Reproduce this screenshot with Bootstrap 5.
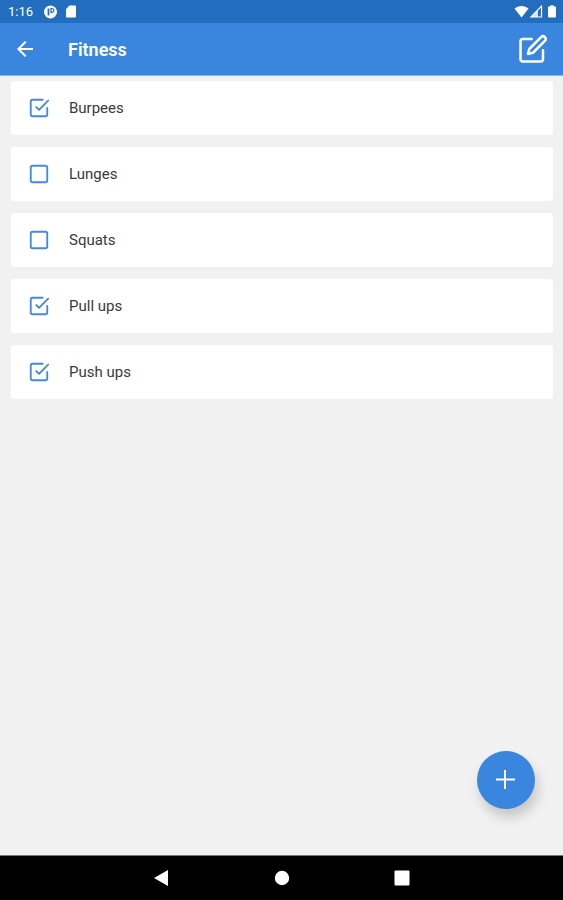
<!DOCTYPE html>
<html lang="en">
<head>
<meta charset="utf-8">
<meta name="viewport" content="width=device-width, initial-scale=1">
<title>Fitness</title>
<link href="https://cdn.jsdelivr.net/npm/bootstrap@5.3.0/dist/css/bootstrap.min.css" rel="stylesheet">
<style>
  body { font-family: Roboto, sans-serif; background: #f1f1f1; color: #3a3a3a; }
  svg { display: block; }
  .status-strip { background: #236dbf; height: 23px; padding: 0 6px 0 8px; font-size: 13px; }
  .status-strip .notices { margin-left: 10px; gap: 8px; }
  .app-header { background: #3a85dd; height: 53px; padding: 0 15px 0 13px; border-bottom: 1px solid #8db8ec; }
  .app-header h1 { font-size: 18px; line-height: 24px; font-weight: 600; margin-left: 31px; padding-top: 2px; }
  .tasks { padding: 5px 10px 5px 11px; gap: 12px; }
  .task { height: 54px; padding: 0 17px; gap: 19px; border-radius: 3px; font-size: 15px; }
  .task .form-check-input {
    width: 22px; height: 22px; border: 0; border-radius: 0; background-color: transparent; background-size: 22px 22px;
    background-image: url("data:image/svg+xml,%3Csvg xmlns='http://www.w3.org/2000/svg' viewBox='0 0 24 24' fill='none' stroke='%234489de' stroke-width='2'%3E%3Crect x='3' y='3' width='18' height='18' rx='2'/%3E%3C/svg%3E");
  }
  .task .form-check-input:checked {
    background-color: transparent;
    background-image: url("data:image/svg+xml,%3Csvg xmlns='http://www.w3.org/2000/svg' viewBox='0 0 24 24' fill='none' stroke='%234489de' stroke-width='2' stroke-linecap='round' stroke-linejoin='round'%3E%3Cpath d='M9 11l3 3L22 4M21 12v7a2 2 0 0 1-2 2H5a2 2 0 0 1-2-2V5a2 2 0 0 1 2-2h11'/%3E%3C/svg%3E");
  }
  .fab { width: 58px; height: 58px; margin: 0 28px 46px; background: #3a85dd; box-shadow: 3px 8px 12px rgba(0, 0, 0, .18); }
  .system-nav { background: #000; height: 45px; border-top: 1px solid #777; gap: 98px; }
</style>
<script src="https://cdn.jsdelivr.net/npm/bootstrap@5.3.0/dist/js/bootstrap.bundle.min.js"></script>
</head>
<body class="d-flex flex-column min-vh-100">
  <div class="status-strip d-flex align-items-center text-white">
    <span>1:16</span>
    <span class="notices d-flex align-items-center">
      <svg width="14" height="14" viewBox="0 0 14 14" aria-hidden="true"><circle cx="7.500" cy="7" r="6.500" fill="#fff"/><path d="M5.500 3.500v7" stroke="#236dbf" stroke-width="1.800"/><path d="M8 3.600h1a1.900 1.900 0 0 1 0 3.800H8z" fill="none" stroke="#236dbf" stroke-width="1.200"/></svg>
      <svg width="12" height="13" viewBox="0 0 12 13" aria-hidden="true"><path d="M4.500.5H10a1 1 0 0 1 1 1v10a1 1 0 0 1-1 1H2a1 1 0 0 1-1-1V4z" fill="#fff"/></svg>
    </span>
    <svg class="ms-auto" width="15" height="13" viewBox="0 0 15 13" aria-hidden="true"><path d="M.5 3.500C4.500 0 10.500 0 14.500 3.500L7.500 12.500z" fill="#fff"/></svg>
    <svg width="14" height="13" viewBox="0 0 14 13" aria-hidden="true"><path d="M2 12 12.500 1.200V12z" fill="none" stroke="#fff" stroke-width="1.200"/><path d="M2 12 9 5v7z" fill="#fff" fill-opacity=".8"/></svg>
    <svg class="ms-1" width="10" height="13" viewBox="0 0 10 13" aria-hidden="true"><path d="M3 .5h4v1h1a1 1 0 0 1 1 1v9a1 1 0 0 1-1 1H2a1 1 0 0 1-1-1v-9a1 1 0 0 1 1-1h1z" fill="#fff"/></svg>
  </div>

  <header class="app-header d-flex align-items-center text-white">
    <button type="button" class="btn p-0 border-0 text-white" aria-label="Back">
      <svg width="24" height="24" viewBox="0 0 24 24" fill="currentColor"><path d="M20 11H7.830l5.590-5.590L12 4l-8 8 8 8 1.410-1.410L7.830 13H20z"/></svg>
    </button>
    <h1 class="mb-0">Fitness</h1>
    <button type="button" class="btn p-0 border-0 text-white ms-auto" aria-label="Edit list">
      <svg width="30" height="30" viewBox="0 0 24 24" fill="none" stroke="currentColor" stroke-width="2" stroke-linecap="round" stroke-linejoin="round"><path d="M11 4H4a2 2 0 0 0-2 2v14a2 2 0 0 0 2 2h14a2 2 0 0 0 2-2v-7"/><path d="M18.500 2.500a2.121 2.121 0 0 1 3 3L12 15l-4 1 1-4 9.500-9.500z"/></svg>
    </button>
  </header>

  <main class="flex-grow-1 d-flex flex-column">
    <ul class="tasks list-unstyled d-flex flex-column mb-0">
      <li class="task bg-white d-flex align-items-center"><input class="form-check-input m-0 flex-shrink-0" type="checkbox" id="burpees" checked><label class="flex-grow-1" for="burpees">Burpees</label></li>
      <li class="task bg-white d-flex align-items-center"><input class="form-check-input m-0 flex-shrink-0" type="checkbox" id="lunges"><label class="flex-grow-1" for="lunges">Lunges</label></li>
      <li class="task bg-white d-flex align-items-center"><input class="form-check-input m-0 flex-shrink-0" type="checkbox" id="squats"><label class="flex-grow-1" for="squats">Squats</label></li>
      <li class="task bg-white d-flex align-items-center"><input class="form-check-input m-0 flex-shrink-0" type="checkbox" id="pullups" checked><label class="flex-grow-1" for="pullups">Pull ups</label></li>
      <li class="task bg-white d-flex align-items-center"><input class="form-check-input m-0 flex-shrink-0" type="checkbox" id="pushups" checked><label class="flex-grow-1" for="pushups">Push ups</label></li>
    </ul>
    <button type="button" class="fab btn rounded-circle border-0 p-0 mt-auto align-self-end d-flex align-items-center justify-content-center text-white" aria-label="Add item">
      <svg width="20" height="20" viewBox="0 0 20 20" stroke="currentColor" stroke-width="2"><path d="M9 0v19M0 9.500h19"/></svg>
    </button>
  </main>

  <nav class="system-nav d-flex align-items-center justify-content-center" aria-label="System">
    <button type="button" class="btn p-0 border-0" aria-label="Back"><svg width="22" height="22" viewBox="0 0 22 22" fill="#fff"><path d="M3 11 17 3v16z"/></svg></button>
    <button type="button" class="btn p-0 border-0" aria-label="Home"><svg width="22" height="22" viewBox="0 0 22 22" fill="#fff"><circle cx="11" cy="11" r="7.200"/></svg></button>
    <button type="button" class="btn p-0 border-0" aria-label="Recent apps"><svg width="22" height="22" viewBox="0 0 22 22" fill="#fff"><rect x="3.500" y="3.500" width="15" height="15" rx="1"/></svg></button>
  </nav>
</body>
</html>
